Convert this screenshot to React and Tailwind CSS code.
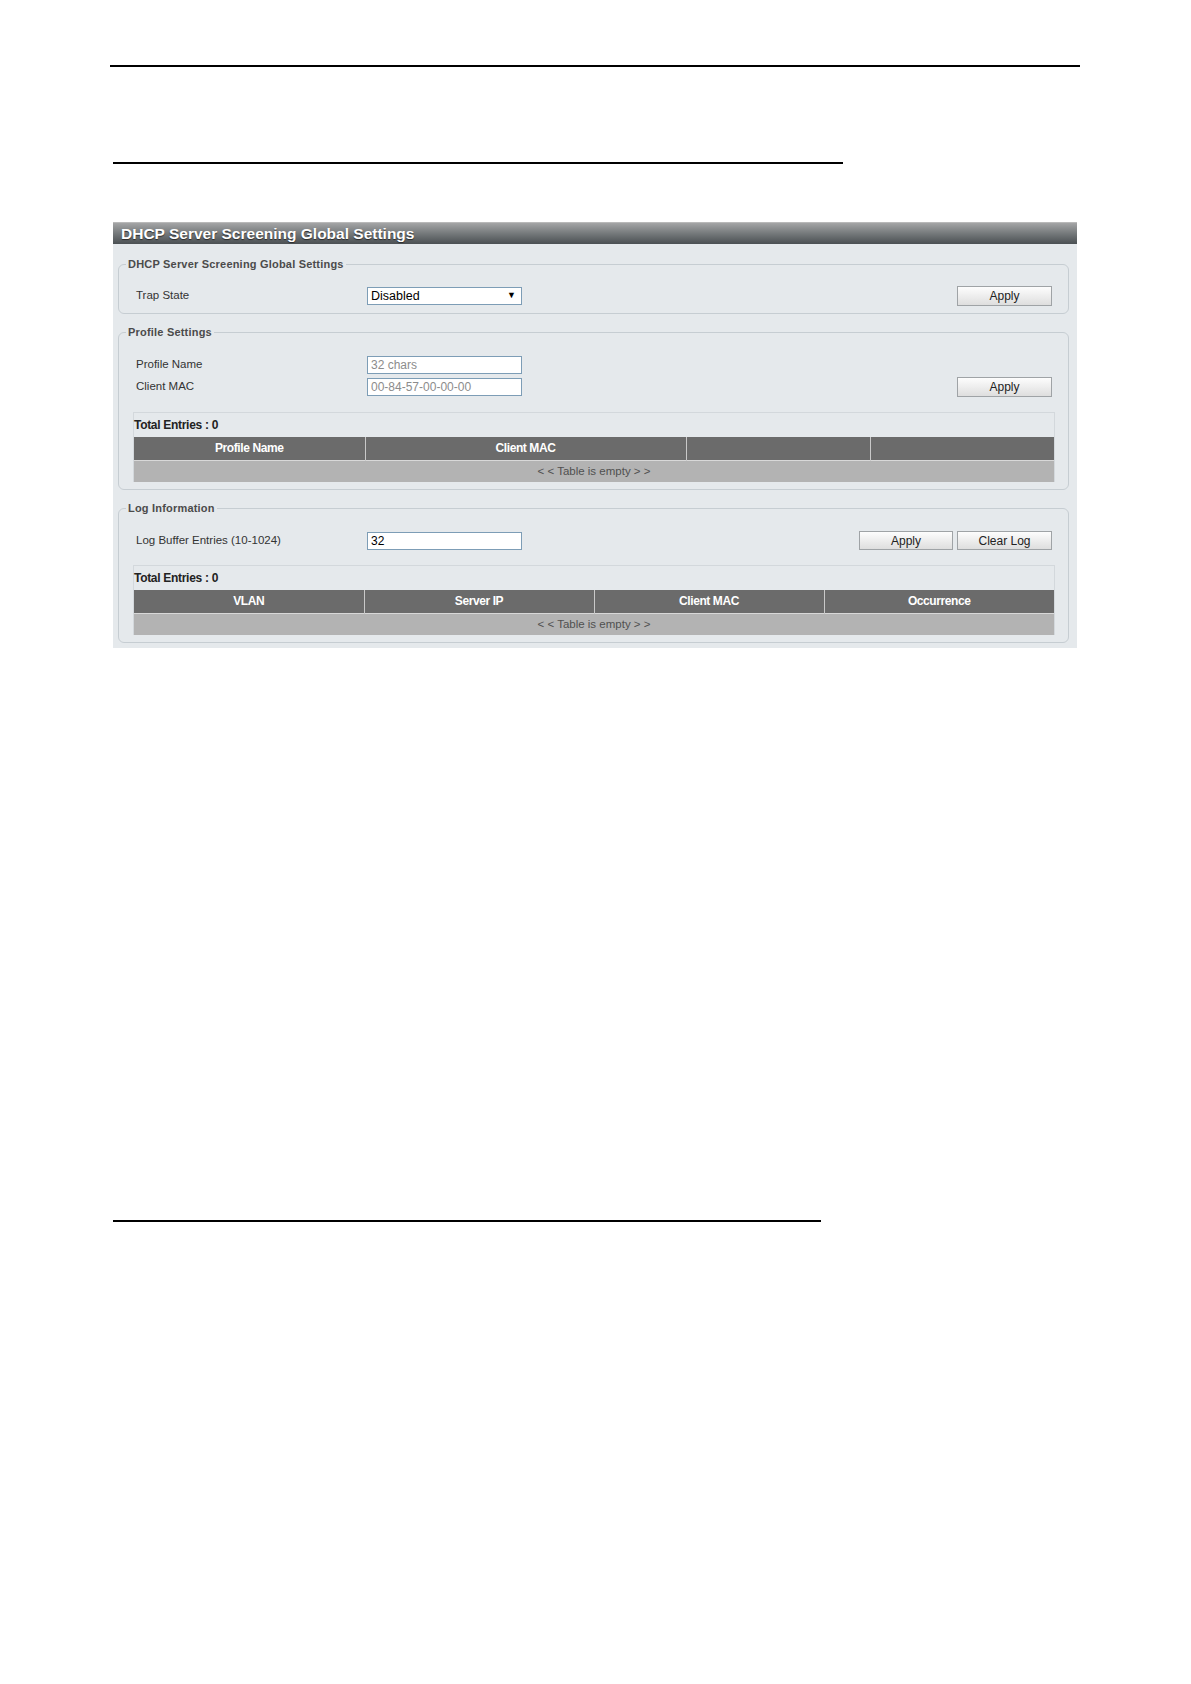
import React from 'react'

const font = { fontFamily: '"Liberation Sans", Arial, sans-serif' }

function Btn({ children, className = '' }) {
    return (
        <button className={`h-[19px] border border-[#9fa3a6] bg-gradient-to-b from-[#fdfdfd] to-[#dedede] text-[12px] leading-none text-[#222] ${className}`}>
            {children}
        </button>
    )
}

function Field({ value, placeholder }) {
    return (
        <input
            readOnly
            value={value}
            placeholder={placeholder}
            className="w-[155px] h-[18px] border border-[#7d9db6] bg-white px-[3px] text-[12px] text-black placeholder:text-[#8c8c8c] outline-none"
        />
    )
}

function Box({ legend, children }) {
    return (
        <fieldset className="min-w-0 border border-[#c6cdd2] rounded-[6px] pl-[14px] pr-[13px] pb-[7px]">
            <legend className="-ml-[7px] px-[2px] text-[11px] leading-[14px] font-bold text-[#4b4b4b] tracking-[0.2px]">{legend}</legend>
            {children}
        </fieldset>
    )
}

function Table({ cols, widths }) {
    return (
        <div className="border-t border-x border-[#d3d8dc]">
            <div className="h-[24px] flex items-center text-[12px] font-bold text-[#222] tracking-[-0.3px]">Total Entries : 0</div>
            <table className="w-full table-fixed border-collapse">
                <colgroup>
                    {widths.map((w, i) => <col key={i} style={{ width: w }} />)}
                </colgroup>
                <thead>
                    <tr className="h-[23px] bg-[#6b6b6b]">
                        {cols.map((c, i) => (
                            <th key={i} className={`text-[12px] font-bold text-white tracking-[-0.4px] ${i > 0 ? 'border-l border-[#c9c9c9]' : ''}`}>{c}</th>
                        ))}
                    </tr>
                </thead>
                <tbody>
                    <tr className="h-[22px] bg-[#b3b3b3] border-t border-[#d8d8d8]">
                        <td colSpan={cols.length} className="text-center text-[11.5px] text-[#505050]">&lt; &lt; Table is empty &gt; &gt;</td>
                    </tr>
                </tbody>
            </table>
        </div>
    )
}

export default function App() {
    return (
        <div className="w-[1191px] h-[1684px] bg-white overflow-hidden" style={font}>
            <div className="h-[2px] bg-black ml-[110px] w-[970px] mt-[65px]" />
            <div className="h-[2px] bg-black ml-[113px] w-[730px] mt-[95px]" />

            <div className="ml-[113px] w-[964px] mt-[58px] bg-[#e5e9ec]">
                {/* panel header */}
                <div className="h-[22px] border-t border-[#b9b9b9] bg-gradient-to-b from-[#a4a5a6] via-[#75797b] to-[#4b5053] pl-[8px] text-[15.5px] leading-[21px] font-bold text-white [text-shadow:0_1px_1px_#2a2a2a]">
                    DHCP Server Screening Global Settings
                </div>

                <div className="pl-[5px] pr-[8px] pt-[13px] pb-[5px] flex flex-col gap-[11px]">
                    <Box legend="DHCP Server Screening Global Settings">
                        <div className="mt-[15px] flex items-center">
                            <span className="w-[234px] pl-[3px] text-[11.5px] text-[#333]">Trap State</span>
                            <div className="w-[155px] h-[18px] border border-[#7d9db6] bg-white flex items-center justify-between px-[3px]">
                                <span className="text-[12.5px] text-black">Disabled</span>
                                <span className="text-[9px] text-black mr-[2px]">▼</span>
                            </div>
                            <Btn className="ml-auto mr-[3px] w-[95px] h-[20px]">Apply</Btn>
                        </div>
                    </Box>

                    <Box legend="Profile Settings">
                        <div className="mt-[17px] flex items-end">
                            <div className="flex flex-col gap-[4px]">
                                <div className="flex items-center">
                                    <span className="w-[234px] pl-[3px] text-[11.5px] text-[#333]">Profile Name</span>
                                    <Field placeholder="32 chars" />
                                </div>
                                <div className="flex items-center">
                                    <span className="w-[234px] pl-[3px] text-[11.5px] text-[#333]">Client MAC</span>
                                    <Field placeholder="00-84-57-00-00-00" />
                                </div>
                            </div>
                            <Btn className="ml-auto mr-[3px] -mb-[1px] w-[95px] h-[20px]">Apply</Btn>
                        </div>
                        <div className="mt-[16px]">
                            <Table
                                cols={['Profile Name', 'Client MAC', '', '']}
                                widths={['231px', '321px', '184px', '184px']}
                            />
                        </div>
                    </Box>

                    <Box legend="Log Information">
                        <div className="mt-[16px] flex items-center">
                            <span className="w-[234px] pl-[3px] text-[11.5px] text-[#333]">Log Buffer Entries (10-1024)</span>
                            <Field value="32" />
                            <div className="ml-auto mr-[3px] flex gap-[4px]">
                                <Btn className="w-[94px]">Apply</Btn>
                                <Btn className="w-[95px]">Clear Log</Btn>
                            </div>
                        </div>
                        <div className="mt-[15px]">
                            <Table
                                cols={['VLAN', 'Server IP', 'Client MAC', 'Occurrence']}
                                widths={['230px', '230px', '230px', '230px']}
                            />
                        </div>
                    </Box>
                </div>
            </div>

            <div className="h-[2px] bg-black ml-[113px] w-[708px] mt-[572px]" />
        </div>
    )
}
